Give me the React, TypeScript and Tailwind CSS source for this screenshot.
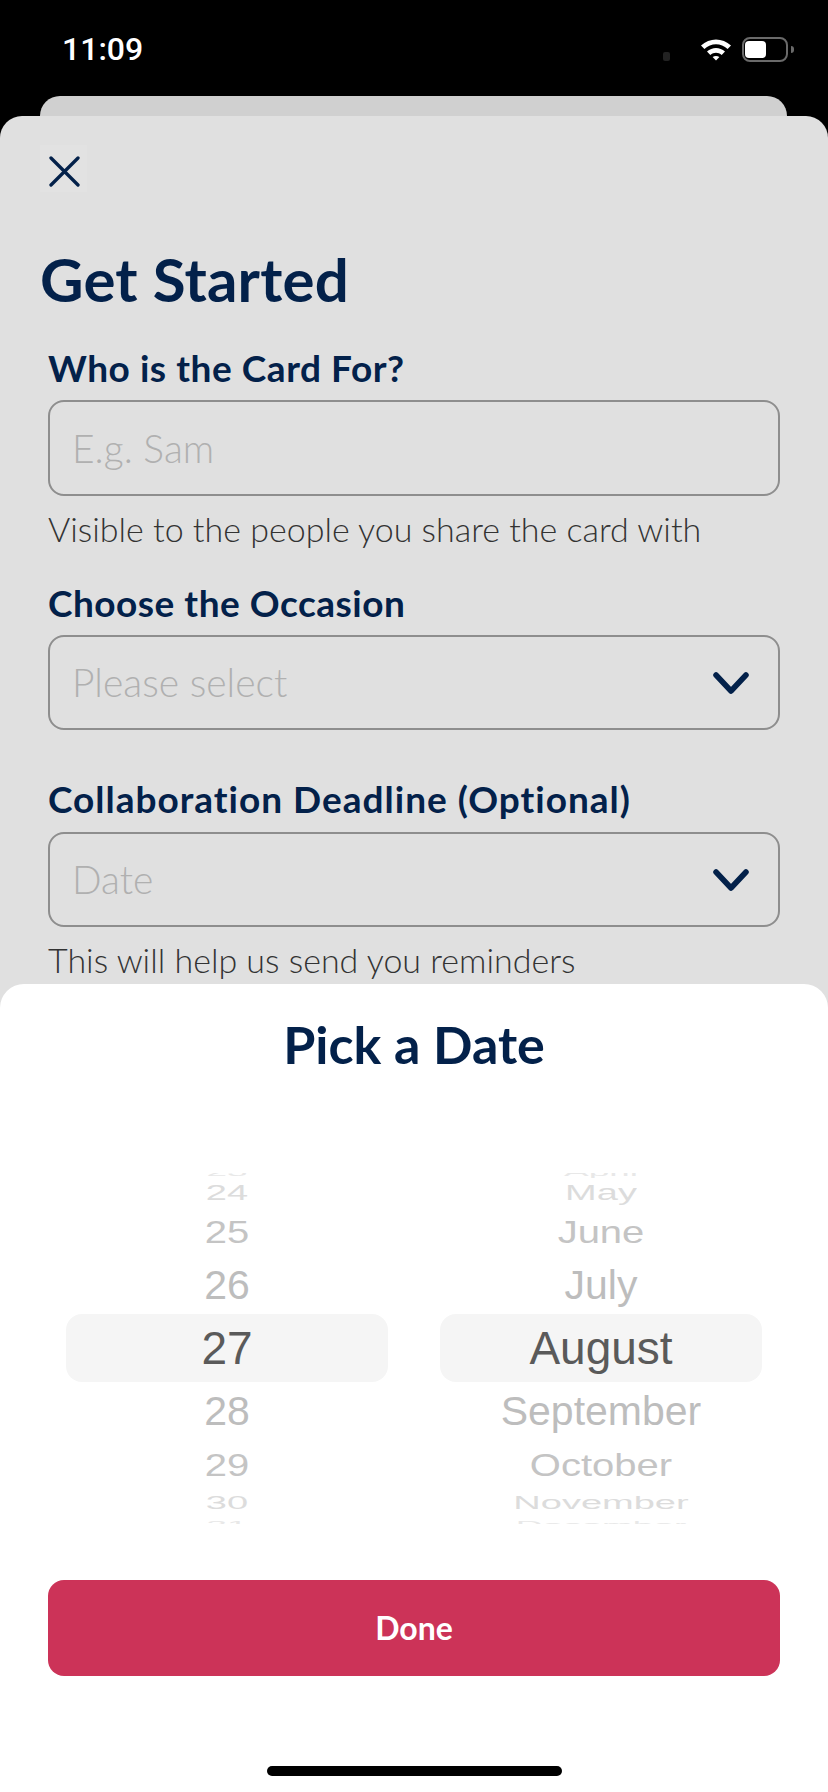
const DAYS = [
  { label: '23', row: 'h-[12px]', text: 'text-[37px] scale-y-[0.3] text-[#e8e8e8]' },
  { label: '24', row: 'h-[30px]', text: 'text-[38px] scale-y-[0.57] text-[#dcdcdc]' },
  { label: '25', row: 'h-[48px]', text: 'text-[40px] scale-y-[0.8] text-[#c4c4c4]' },
  { label: '26', row: 'h-[58px]', text: 'text-[41px] scale-y-[0.97] text-[#bdbdbd]' },
  { label: '27', row: 'h-[68px] bg-[#f5f5f5] rounded-[16px]', text: 'text-[46px] text-[#5a5a5a]' },
  { label: '28', row: 'h-[58px]', text: 'text-[41px] scale-y-[0.97] text-[#bdbdbd]' },
  { label: '29', row: 'h-[50px]', text: 'text-[40px] scale-y-[0.8] text-[#c4c4c4]' },
  { label: '30', row: 'h-[26px]', text: 'text-[38px] scale-y-[0.47] text-[#dcdcdc]' },
  { label: '31', row: 'h-[18px]', text: 'text-[37px] scale-y-[0.3] text-[#e8e8e8]' },
]

const MONTHS = ['April', 'May', 'June', 'July', 'August', 'September', 'October', 'November', 'December']

function Wheel({ labels }: { labels: string[] }) {
  return (
    <div className="w-[322px] h-[351px] overflow-hidden">
      <div className="-mt-[7px] flex flex-col">
        {DAYS.map((d, i) => (
          <div key={labels[i]} className={`flex items-center justify-center ${d.row}`}>
            <span className={`block leading-none font-['Liberation_Sans',sans-serif] ${d.text}`}>{labels[i]}</span>
          </div>
        ))}
      </div>
    </div>
  )
}

function Field({ placeholder, select, height = 'h-[96px]' }: { placeholder: string; select?: boolean; height?: string }) {
  return (
    <div className={`${height} w-[732px] rounded-[16px] border-2 border-[#8e8e8e] flex items-center justify-between pl-[22px] pr-[28px]`}>
      <span className="text-[39px] font-light text-[#b0b0b0] leading-none">{placeholder}</span>
      {select && (
        <svg width="38" height="24" viewBox="0 0 38 24" fill="none" stroke="#03214a" strokeWidth="5.5" strokeLinecap="round" strokeLinejoin="round">
          <path d="M4 4L19 20L34 4" />
        </svg>
      )}
    </div>
  )
}

export default function App() {
  return (
    <div className="relative w-[828px] h-[1792px] overflow-hidden bg-black font-['Lato',sans-serif]">
      {/* status bar */}
      <div className="h-[96px] flex items-start text-white">
        <span className="ml-[62px] mt-[30px] text-[32px] font-medium leading-[38px] font-['Roboto',sans-serif]">11:09</span>
        <div className="ml-auto mt-[37px] mr-[34px] flex items-start">
          <div className="w-[7px] h-[9px] mt-[15px] rounded-[2px] bg-[#222222] mr-[30px]" />
          <svg width="32" height="24" viewBox="0 0 32 24" className="mr-[10px]">
            <path d="M1 8.5C9.5 0.5 22.5 0.5 31 8.5L27.6 12C21 5.6 11 5.6 4.4 12Z" fill="white" />
            <path d="M7 14.5C12.2 9.8 19.8 9.8 25 14.5L21.7 17.9C18.3 14.9 13.7 14.9 10.3 17.9Z" fill="white" />
            <path d="M12.6 20.1C14.6 18.5 17.4 18.5 19.4 20.1L16 23.6Z" fill="white" />
          </svg>
          <div className="w-[46px] h-[25px] rounded-[8px] border-2 border-[#6a6a6a] px-[1px] py-[2px]">
            <div className="w-[21px] h-full rounded-[4px] bg-white" />
          </div>
          <div className="w-[3px] h-[7px] mt-[9px] ml-[3px] rounded-r-[3px] bg-[#6a6a6a]" />
        </div>
      </div>

      {/* card stacked behind the modal */}
      <div className="absolute left-[40px] top-[96px] w-[747px] h-[60px] rounded-t-[20px] bg-[#d0d0d0]" />

      {/* modal, dimmed */}
      <div className="absolute left-0 top-[116px] w-[828px] h-[900px] rounded-t-[22px] bg-[#e0e0e0] pt-[29px]">
        <div className="ml-[40px] w-[47px] h-[47px] pt-[5px] pl-[1px] flex items-center justify-center bg-[#e2e2e2]">
          <svg width="31" height="31" viewBox="0 0 31 31" fill="none" stroke="#03214a" strokeWidth="3.3" strokeLinecap="round">
            <path d="M2 2L29 29M29 2L2 29" />
          </svg>
        </div>
        <h1 className="ml-[40px] mt-[57px] text-[60px] leading-[60px] font-bold tracking-[0.2px] text-[#03214a]">Get Started</h1>

        <div className="ml-[48px] mt-[37px] flex flex-col">
          <label className="text-[37px] leading-[44px] font-bold tracking-[0.55px] text-[#03214a]">Who is the Card For?</label>
          <div className="mt-[10px]"><Field placeholder="E.g. Sam" /></div>
          <p className="mt-[13px] text-[34px] leading-[40px] font-light text-[#333333]">Visible to the people you share the card with</p>

          <label className="mt-[32px] text-[37px] leading-[44px] font-bold tracking-[0.5px] text-[#03214a]">Choose the Occasion</label>
          <div className="mt-[10px]"><Field placeholder="Please select" select height="h-[95px]" /></div>

          <label className="mt-[47px] text-[37px] leading-[44px] font-bold tracking-[1px] text-[#03214a]">Collaboration Deadline (Optional)</label>
          <div className="mt-[11px]"><Field placeholder="Date" select height="h-[95px]" /></div>
          <p className="mt-[13px] text-[34px] leading-[40px] font-light text-[#333333]">This will help us send you reminders</p>
        </div>
      </div>

      {/* date sheet */}
      <div className="absolute left-0 top-[984px] w-[828px] h-[808px] rounded-t-[24px] bg-white flex flex-col items-center">
        <h2 className="mt-[30px] text-[52px] leading-[60px] font-bold text-[#03214a]">Pick a Date</h2>
        <div className="mt-[99px] flex gap-[52px]">
          <Wheel labels={DAYS.map((d) => d.label)} />
          <Wheel labels={MONTHS} />
        </div>
        <button className="mt-[56px] w-[732px] h-[96px] rounded-[16px] bg-[#cc3358] text-white text-[32px] font-bold">Done</button>
        <div className="mt-[90px] w-[295px] h-[10px] rounded-full bg-black" />
      </div>
    </div>
  )
}
